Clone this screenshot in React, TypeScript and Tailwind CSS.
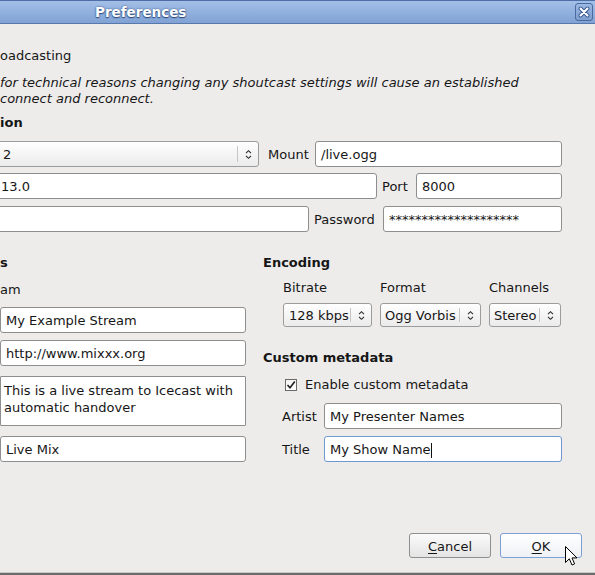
import React from "react";

function Arrows() {
  return (
    <svg width="7" height="11" viewBox="0 0 7 11" fill="none" stroke="#2a2a2a" strokeWidth="1.1">
      <path d="M1 4.2 L3.5 1.7 L6 4.2" />
      <path d="M1 6.8 L3.5 9.3 L6 6.8" />
    </svg>
  );
}

function Combo({ text, className, pad = "pl-[5px]" }: { text: string; className: string; pad?: string }) {
  return (
    <div
      className={`flex items-center rounded-[3px] border border-[#9c9c9c] bg-gradient-to-b from-[#ffffff] to-[#ebebeb] ${className}`}
    >
      <span className={`flex-1 whitespace-nowrap overflow-hidden leading-[16px] mt-[2px] ${pad}`}>{text}</span>
      <div className="w-px self-stretch my-[4px] bg-[#c6c6c6]" />
      <div className="w-[20px] flex justify-center items-center">
        <Arrows />
      </div>
    </div>
  );
}

function Field({ text, className, focused = false, pad = "pl-[5px]", children }: { text?: string; className: string; focused?: boolean; pad?: string; children?: React.ReactNode }) {
  return (
    <div
      className={`flex items-center h-[26px] rounded-[3px] bg-white border ${
        focused ? "border-[#6f97d2]" : "border-[#8e8e8e]"
      } ${className}`}
    >
      <span className={`whitespace-nowrap leading-[16px] mt-[2px] ${pad}`}>{text}</span>
      {children}
    </div>
  );
}

export default function App() {
  return (
    <div className="relative w-[595px] h-[575px] overflow-hidden bg-[#edeceb] flex flex-col font-['DejaVu_Sans',sans-serif] text-[13px] text-[#161616]">
      {/* Title bar */}
      <div className="h-[24px] shrink-0 flex items-center border-t border-t-[#4d6ea6] border-b border-b-[#5877ab] bg-gradient-to-b from-[#a3bfe7] to-[#80a2d4]">
        <span className="pl-[95px] text-white font-bold text-[13.5px] leading-[16px] [text-shadow:0_0_2px_#2c4a7e,0_1px_1px_#2c4a7e]">
          Preferences
        </span>
        <div className="ml-auto mr-[2px] w-[18px] h-[18px] rounded-[3px] border border-[#4a6aa0] bg-gradient-to-b from-[#9bb8e2] to-[#7f9fd1] flex items-center justify-center">
          <svg width="12" height="12" viewBox="0 0 12 12">
            <path d="M2.5 2.5 L9.5 9.5 M9.5 2.5 L2.5 9.5" stroke="#3d5c90" strokeWidth="4" strokeLinecap="round" />
            <path d="M2.5 2.5 L9.5 9.5 M9.5 2.5 L2.5 9.5" stroke="#ffffff" strokeWidth="2" strokeLinecap="round" />
          </svg>
        </div>
      </div>

      {/* Body */}
      <div className="flex-1 flex flex-col">
        <div className="pt-[24px] leading-[16px] whitespace-nowrap">oadcasting</div>
        <div className="mt-[11px] italic leading-[16px] whitespace-nowrap">
          for technical reasons changing any shoutcast settings will cause an established
          <br />
          connect and reconnect.
        </div>
        <div className="mt-[8px] font-bold leading-[16px]">ion</div>

        {/* Row 1 */}
        <div className="mt-[10px] w-[562px] flex items-center h-[26px]">
          <Combo text="2" className="-ml-[20px] w-[279px] h-[26px]" pad="pl-[22px]" />
          <span className="ml-[9px] mt-[2px] leading-[16px]">Mount</span>
          <Field text="/live.ogg" className="ml-auto w-[247px]" />
        </div>
        {/* Row 2 */}
        <div className="mt-[6px] w-[562px] flex items-center h-[26px]">
          <Field text="13.0" className="-ml-[20px] w-[397px]" pad="pl-[20px]" />
          <span className="ml-[5px] mt-[2px] leading-[16px]">Port</span>
          <Field text="8000" className="ml-auto w-[146px]" />
        </div>
        {/* Row 3 */}
        <div className="mt-[7px] w-[562px] flex items-center h-[26px]">
          <Field text="" className="-ml-[20px] w-[329px]" />
          <span className="ml-[5px] mt-[2px] leading-[16px]">Password</span>
          <Field text="********************" className="ml-auto w-[179px]" />
        </div>

        {/* Section 2 */}
        <div className="mt-[23px] flex w-[562px]">
          {/* Left column */}
          <div className="w-[246px] flex flex-col">
            <div className="font-bold leading-[16px]">s</div>
            <div className="mt-[11px] leading-[16px]">am</div>
            <Field text="My Example Stream" className="mt-[9px] w-[246px]" />
            <Field text="http://www.mixxx.org" className="mt-[7px] w-[246px]" />
            <div className="mt-[10px] h-[50px] w-[246px] bg-white border border-[#8e8e8e] rounded-[1px] pl-[3px] pt-[5px] leading-[17px] whitespace-nowrap">
              This is a live stream to Icecast with
              <br />
              automatic handover
            </div>
            <Field text="Live Mix" className="mt-[10px] w-[246px]" />
          </div>

          {/* Right column */}
          <div className="ml-[17px] flex-1 flex flex-col">
            <div className="font-bold leading-[16px]">Encoding</div>
            <div className="mt-[9px] pl-[20px] flex gap-[8px]">
              <div className="flex flex-col">
                <span className="leading-[16px]">Bitrate</span>
                <Combo text="128 kbps" className="mt-[7px] w-[89px] h-[24px]" />
              </div>
              <div className="flex flex-col">
                <span className="leading-[16px]">Format</span>
                <Combo text="Ogg Vorbis" className="mt-[7px] w-[101px] h-[24px]" pad="pl-[4px]" />
              </div>
              <div className="flex flex-col">
                <span className="leading-[16px]">Channels</span>
                <Combo text="Stereo" className="mt-[7px] w-[72px] h-[24px]" pad="pl-[4px]" />
              </div>
            </div>
            <div className="mt-[23px] font-bold leading-[16px]">Custom metadata</div>
            <div className="mt-[11px] pl-[22px] flex items-center h-[16px]">
              <div className="w-[12px] h-[12px] border border-[#6a6a6a] bg-gradient-to-b from-[#f4f4f4] to-[#ffffff] flex items-center justify-center">
                <svg width="10" height="10" viewBox="0 0 10 10">
                  <path d="M1.5 5 L4 7.8 L8.8 1.5" stroke="#1e1e1e" strokeWidth="1.6" fill="none" />
                </svg>
              </div>
              <span className="ml-[8px] leading-[16px]">Enable custom metadata</span>
            </div>
            <div className="mt-[10px] flex items-center h-[26px]">
              <span className="pl-[19px] mt-[2px] leading-[16px]">Artist</span>
              <Field text="My Presenter Names" className="ml-auto w-[238px]" />
            </div>
            <div className="mt-[7px] flex items-center h-[26px]">
              <span className="pl-[19px] mt-[2px] leading-[16px]">Title</span>
              <Field text="My Show Name" className="ml-auto w-[238px]" focused>
                <span className="w-px h-[15px] mt-[2px] bg-[#111]" />
              </Field>
            </div>
          </div>
        </div>

        <div className="flex-1" />

        {/* Buttons */}
        <div className="flex justify-end gap-[9px] pr-[13px] mb-[14px]">
          <div className="w-[82px] h-[25px] rounded-[3px] border border-[#8f8f8f] bg-gradient-to-b from-[#fbfbfb] to-[#e4e4e4] flex items-center justify-center leading-[16px]">
            <span className="mt-[2px]">
              <span className="underline underline-offset-2">C</span>ancel
            </span>
          </div>
          <div className="w-[82px] h-[25px] rounded-[3px] border border-[#7c9fd4] bg-gradient-to-b from-[#ffffff] to-[#eef1f5] flex items-center justify-center leading-[16px]">
            <span className="mt-[2px]">
              <span className="underline underline-offset-2">O</span>K
            </span>
          </div>
        </div>
      </div>

      <div className="h-px bg-[#c9c8c6] shrink-0" />
      <div className="h-[2px] bg-[#6b6b6b] shrink-0" />

      {/* Mouse pointer */}
      <svg className="absolute left-[565px] top-[546px]" width="14" height="22" viewBox="0 0 14 22">
        <path d="M0.5 0.5 L0.5 16.5 L4.3 12.8 L7 19 L9.6 17.9 L7 11.9 L12 11.9 Z" fill="#ffffff" stroke="#000000" strokeWidth="1" strokeLinejoin="round" />
      </svg>
    </div>
  );
}
